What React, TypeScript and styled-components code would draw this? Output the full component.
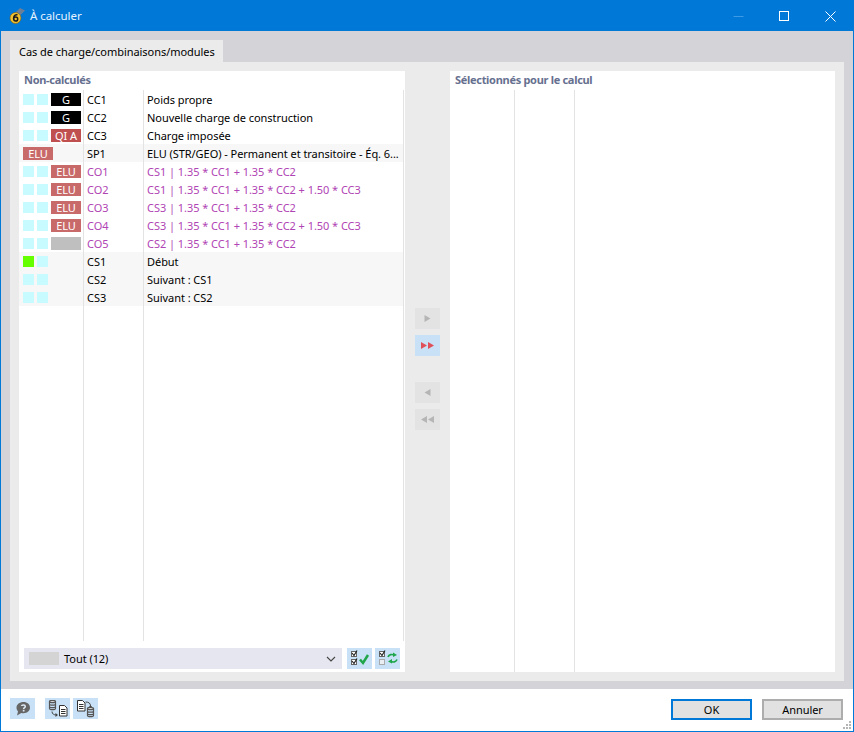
import * as React from "react";
import styled, { createGlobalStyle } from "styled-components";

const GlobalStyle = createGlobalStyle`
  html, body {
    margin: 0;
    padding: 0;
    background: #fff;
  }
  * {
    box-sizing: border-box;
  }
`;

const FONT = `"Noto Sans", "Open Sans", sans-serif`;

const Window = styled.div`
  width: 854px;
  height: 732px;
  display: flex;
  flex-direction: column;
  border: 1px solid #0078d7;
  background: #fff;
  font-family: ${FONT};
  font-size: 11px;
  letter-spacing: -0.05px;
  color: #000;
  overflow: hidden;
  position: relative;
`;

const TitleBar = styled.div`
  height: 30px;
  flex: none;
  background: #0078d7;
  display: flex;
  align-items: center;
  color: #fff;
`;

const AppIcon = styled.svg`
  margin-left: 8px;
  width: 16px;
  height: 16px;
  flex: none;
`;

const TitleText = styled.div`
  margin-left: 5px;
  padding-bottom: 2px;
  font-size: 11.5px;
  flex: 1;
  color: #e6f3ff;
`;

const WinButton = styled.div`
  width: 46px;
  height: 30px;
  display: flex;
  align-items: center;
  justify-content: center;
`;

const Body = styled.div`
  height: 658px;
  flex: none;
  background: #d4d3d7;
  padding: 9px 9px 8px 9px;
  display: flex;
  flex-direction: column;
`;

const Tabs = styled.div`
  display: flex;
  height: 22px;
  flex: none;
`;

const Tab = styled.div`
  width: 213px;
  background: #ebebeb;
  padding: 4px 0 0 9px;
  white-space: nowrap;
`;

const TabPanel = styled.div`
  flex: 1;
  background: #ebebeb;
  padding: 9px;
  display: flex;
  min-height: 0;
`;

const ListPanel = styled.div<{ $width: number }>`
  width: ${(p) => p.$width}px;
  flex: none;
  background: #fff;
  display: flex;
  flex-direction: column;
  position: relative;
`;

const PanelTitle = styled.div`
  height: 19px;
  flex: none;
  padding: 1px 0 0 5px;
  font-weight: 700;
  font-size: 11px;
  letter-spacing: -0.3px;
  color: #66708f;
  white-space: nowrap;
`;

const Columns = styled.div`
  flex: 1;
  min-height: 0;
  display: flex;
  flex-direction: column;
`;

const GRID = "64px 60px 259px 1px";

const Row = styled.div<{ $shaded?: boolean; $combo?: boolean }>`
  height: 18px;
  width: 384px;
  flex: none;
  display: grid;
  grid-template-columns: ${GRID};
  background: ${(p) => (p.$shaded ? "#f7f7f7" : "#fff")};
  color: ${(p) => (p.$combo ? "#b044b4" : "#000")};
  line-height: 18px;
  white-space: nowrap;
`;

const Marks = styled.div`
  display: flex;
  align-items: center;
  gap: 3px;
  padding-left: 4px;
`;

const Square = styled.span<{ $on?: boolean }>`
  width: 11px;
  height: 11px;
  flex: none;
  background: ${(p) => (p.$on ? "#66ff00" : "#c8fbff")};
`;

const Badge = styled.span<{ $bg: string }>`
  width: 30px;
  height: 13px;
  flex: none;
  background: ${(p) => p.$bg};
  color: #fff;
  font-size: 11px;
  line-height: 13px;
  text-align: center;
`;

const Cell = styled.div`
  border-left: 1px solid #e3e3e3;
  padding: 1px 0 0 3px;
  overflow: hidden;
`;

const VLines = styled.div<{ $bottom: number }>`
  position: absolute;
  top: 19px;
  bottom: ${(p) => p.$bottom}px;
  left: 0;
  right: 0;
  pointer-events: none;
`;

const VLine = styled.i<{ $x: number }>`
  position: absolute;
  top: 0;
  bottom: 0;
  left: ${(p) => p.$x}px;
  width: 1px;
  background: #e3e3e3;
`;

const FilterBar = styled.div`
  height: 21px;
  flex: none;
  margin: 0 5px 3px 5px;
  display: flex;
  gap: 3px;
`;

const Select = styled.div`
  width: 318px;
  margin-right: 2px;
  background: #e6e6f0;
  display: flex;
  align-items: center;
  padding: 0 6px 0 5px;
`;

const Swatch = styled.span`
  width: 30px;
  height: 13px;
  background: #d4d4d4;
  margin-right: 5px;
`;

const SelectText = styled.span`
  flex: 1;
`;

const IconButton = styled.div<{ $muted?: boolean }>`
  width: 25px;
  height: 21px;
  flex: none;
  background: ${(p) => (p.$muted ? "#e3e3e3" : "#c8e1f6")};
  display: flex;
  align-items: center;
  justify-content: center;
`;

const Mover = styled.div`
  width: 45px;
  flex: none;
  padding: 237px 0 0 10px;
  display: flex;
  flex-direction: column;
`;

const MoverGroup = styled.div`
  display: flex;
  flex-direction: column;
  gap: 6px;
  margin-bottom: 26px;
`;

const Footer = styled.div`
  flex: 1;
  display: flex;
  align-items: flex-start;
  padding: 9px 10px 0 9px;
  position: relative;
`;

const FooterIcons = styled.div`
  display: flex;
  gap: 3px;
  margin-right: auto;
`;

const HelpWrap = styled.div`
  margin-right: 10px;
`;

const DialogButton = styled.div<{ $primary?: boolean }>`
  width: 81px;
  height: 21px;
  margin-top: 1px;
  margin-left: 10px;
  background: #e1e1e1;
  border: 2px solid ${(p) => (p.$primary ? "#0078d7" : "#adadad")};
  line-height: 18px;
  text-align: center;
`;

const Grip = styled.svg`
  position: absolute;
  right: 0;
  bottom: 0;
  width: 12px;
  height: 12px;
`;

const rows = [
  { id: "CC1", text: "Poids propre", marks: 2, badge: "G", bg: "#000" },
  { id: "CC2", text: "Nouvelle charge de construction", marks: 2, badge: "G", bg: "#000" },
  { id: "CC3", text: "Charge imposée", marks: 2, badge: "QI A", bg: "#c05050" },
  { id: "SP1", text: "ELU (STR/GEO) - Permanent et transitoire - Éq. 6...", marks: 0, badge: "ELU", bg: "#c96a6a", shaded: true },
  { id: "CO1", text: "CS1 | 1.35 * CC1 + 1.35 * CC2", marks: 2, badge: "ELU", bg: "#c96a6a", combo: true },
  { id: "CO2", text: "CS1 | 1.35 * CC1 + 1.35 * CC2 + 1.50 * CC3", marks: 2, badge: "ELU", bg: "#c96a6a", combo: true },
  { id: "CO3", text: "CS3 | 1.35 * CC1 + 1.35 * CC2", marks: 2, badge: "ELU", bg: "#c96a6a", combo: true },
  { id: "CO4", text: "CS3 | 1.35 * CC1 + 1.35 * CC2 + 1.50 * CC3", marks: 2, badge: "ELU", bg: "#c96a6a", combo: true },
  { id: "CO5", text: "CS2 | 1.35 * CC1 + 1.35 * CC2", marks: 2, badge: "", bg: "#bfbfbf", combo: true },
  { id: "CS1", text: "Début", marks: 2, on: true, shaded: true },
  { id: "CS2", text: "Suivant : CS1", marks: 2, shaded: true },
  { id: "CS3", text: "Suivant : CS2", marks: 2, shaded: true },
];

// one or two small triangles, 7px tall, centred in a 15x9 box
const Arrow = ({ dir, count, color }: { dir: "l" | "r"; count: number; color: string }) => (
  <svg width="15" height="9" viewBox="0 0 15 9">
    {Array.from({ length: count }).map((_, i) => {
      const x = count === 1 ? 4.5 : 1 + i * 7;
      return (
        <polygon
          key={i}
          fill={color}
          points={dir === "r" ? `${x},1 ${x + 6},4.5 ${x},8` : `${x + 6},1 ${x},4.5 ${x + 6},8`}
        />
      );
    })}
  </svg>
);

const Check = ({ x, y, on = true }: { x: number; y: number; on?: boolean }) => (
  <g>
    <rect x={x + 0.5} y={y + 0.5} width="5" height="5" fill={on ? "#fff" : "#e8eef4"} stroke={on ? "#666" : "#aaa"} />
    {on && <path d={`M${x + 1} ${y + 2}l2 2.500 3-5`} fill="none" stroke="#222" strokeWidth="1.2" />}
  </g>
);

const DbStack = ({ x, y }: { x: number; y: number }) => (
  <g fill="none" stroke="#555" strokeWidth="1.2">
    <ellipse cx={x + 3.5} cy={y + 1.5} rx="3" ry="1.2" fill="#ddd" />
    <path d={`M${x + 0.5} ${y + 1.5}v7c0 1.600 6 1.600 6 0v-7M${x + 0.5} ${y + 4}c0 1.600 6 1.600 6 0M${x + 0.5} ${y + 6.5}c0 1.600 6 1.600 6 0`} />
  </g>
);

const Doc = ({ x, y }: { x: number; y: number }) => (
  <g>
    <path d={`M${x + 0.5} ${y + 0.5}h5l2.500 2.500v8h-7.500z`} fill="#fff" stroke="#333" />
    <path d={`M${x + 2} ${y + 4.5}h4.500M${x + 2} ${y + 6.5}h4.500M${x + 2} ${y + 8.5}h4.500`} stroke="#333" />
  </g>
);

export default function App() {
  return (
    <>
      <GlobalStyle />
      <Window>
        <TitleBar>
          <AppIcon viewBox="0 0 16 16">
            <path d="M6 5 L11 0 L16 2.500 L11 7.500z" fill="#6b7f99" />
            <circle cx="6.500" cy="10" r="5.500" fill="#f2c230" stroke="#7a5a10" strokeWidth="0.6" />
            <path d="M8.500 6.700C6 6.300 4.600 8.100 4.600 10.300c0 1.800 1 2.800 2.100 2.800s2-1 2-2.100-.8-2-1.900-2c-.9 0-1.500.4-2 1" fill="none" stroke="#1c1c1c" strokeWidth="1.500" />
          </AppIcon>
          <TitleText>À calculer</TitleText>
          <WinButton>
            <svg width="11" height="11"><path d="M0.500 5.500h10" stroke="#3f9ae6" /></svg>
          </WinButton>
          <WinButton>
            <svg width="10" height="10"><rect x="0.500" y="0.500" width="9" height="9" fill="none" stroke="#fff" /></svg>
          </WinButton>
          <WinButton>
            <svg width="11" height="11"><path d="M0.500 0.500l10 10M10.500 0.500l-10 10" stroke="#fff" /></svg>
          </WinButton>
        </TitleBar>
        <Body>
          <Tabs>
            <Tab>Cas de charge/combinaisons/modules</Tab>
          </Tabs>
          <TabPanel>
            <ListPanel $width={386}>
              <PanelTitle>Non-calculés</PanelTitle>
              <VLines $bottom={31}>
                <VLine $x={64} />
                <VLine $x={124} />
                <VLine $x={384} />
              </VLines>
              <Columns>
                {rows.map((r) => (
                  <Row key={r.id} $shaded={r.shaded} $combo={r.combo}>
                    <Marks>
                      {r.marks > 0 && <Square $on={r.on} />}
                      {r.marks > 0 && <Square />}
                      {r.badge !== undefined && <Badge $bg={r.bg!}>{r.badge}</Badge>}
                    </Marks>
                    <Cell>{r.id}</Cell>
                    <Cell>{r.text}</Cell>
                  </Row>
                ))}
              </Columns>
              <FilterBar>
                <Select>
                  <Swatch />
                  <SelectText>Tout (12)</SelectText>
                  <svg width="10" height="6" viewBox="0 0 10 6">
                    <path d="M1 1l4 4 4-4" fill="none" stroke="#444" strokeWidth="1.100" />
                  </svg>
                </Select>
                <IconButton>
                  <svg width="21" height="17" viewBox="0 0 21 17">
                    <Check x={2} y={1} />
                    <Check x={2} y={9} />
                    <path d="M11 9.500l3 3.500L19 5" fill="none" stroke="#1fa64a" strokeWidth="2.500" />
                  </svg>
                </IconButton>
                <IconButton>
                  <svg width="21" height="17" viewBox="0 0 21 17">
                    <Check x={2} y={1} />
                    <Check x={2} y={9} on={false} />
                    <path d="M11 7c1-2.500 4-3 6-2" fill="none" stroke="#1fa64a" strokeWidth="1.700" />
                    <path d="M16 2.500l4 2.500-4 2z" fill="#1fa64a" />
                    <path d="M20 9.500c-1 2.500-4 3-6 2" fill="none" stroke="#1fa64a" strokeWidth="1.700" />
                    <path d="M15 9l-4 2.500 4 2z" fill="#1fa64a" />
                  </svg>
                </IconButton>
              </FilterBar>
            </ListPanel>
            <Mover>
              <MoverGroup>
                <IconButton $muted>
                  <Arrow dir="r" count={1} color="#b5b5b5" />
                </IconButton>
                <IconButton>
                  <Arrow dir="r" count={2} color="#e0505a" />
                </IconButton>
              </MoverGroup>
              <MoverGroup>
                <IconButton $muted>
                  <Arrow dir="l" count={1} color="#b5b5b5" />
                </IconButton>
                <IconButton $muted>
                  <Arrow dir="l" count={2} color="#b5b5b5" />
                </IconButton>
              </MoverGroup>
            </Mover>
            <ListPanel $width={385}>
              <PanelTitle>Sélectionnés pour le calcul</PanelTitle>
              <VLines $bottom={0}>
                <VLine $x={64} />
                <VLine $x={124} />
              </VLines>
            </ListPanel>
          </TabPanel>
        </Body>
        <Footer>
          <HelpWrap>
            <IconButton>
              <svg width="18" height="17" viewBox="0 0 18 17">
                <path d="M9.500 2c3.800 0 6.500 2.400 6.500 5.600s-2.700 5.600-6.500 5.600c-.8 0-1.500-.1-2.200-.3L3 15.500l1-4c-1-1-1.500-2.400-1.500-3.900C2.500 4.400 5.700 2 9.500 2z" fill="#666" />
                <path d="M7.500 6c.2-1.200 3.800-1.400 3.800.4 0 1.200-1.700 1.300-1.700 2.600" fill="none" stroke="#dfeaf4" strokeWidth="1.500" />
                <rect x="8.800" y="9.800" width="1.700" height="1.700" fill="#dfeaf4" />
              </svg>
            </IconButton>
          </HelpWrap>
          <FooterIcons>
            <IconButton>
              <svg width="21" height="18" viewBox="0 0 21 18">
                <DbStack x={2} y={0} />
                <path d="M5 11.500c0 2.500 2 3.500 4.500 3.500" fill="none" stroke="#444" />
                <path d="M8.500 13l2.500 2-2.500 2z" fill="#444" />
                <Doc x={12} y={5} />
              </svg>
            </IconButton>
            <IconButton>
              <svg width="21" height="18" viewBox="0 0 21 18">
                <Doc x={2} y={0} />
                <path d="M10.500 2c3 0 5 1 5 4" fill="none" stroke="#444" />
                <path d="M14 6h3l-1.500 2.500z" fill="#444" />
                <DbStack x={12} y={7} />
              </svg>
            </IconButton>
          </FooterIcons>
          <DialogButton $primary>OK</DialogButton>
          <DialogButton>Annuler</DialogButton>
          <Grip viewBox="0 0 12 12">
            <g fill="#b5b5b5">
              <rect x="8" y="2" width="2" height="2" />
              <rect x="5" y="5" width="2" height="2" />
              <rect x="8" y="5" width="2" height="2" />
              <rect x="2" y="8" width="2" height="2" />
              <rect x="5" y="8" width="2" height="2" />
              <rect x="8" y="8" width="2" height="2" />
            </g>
          </Grip>
        </Footer>
      </Window>
    </>
  );
}
